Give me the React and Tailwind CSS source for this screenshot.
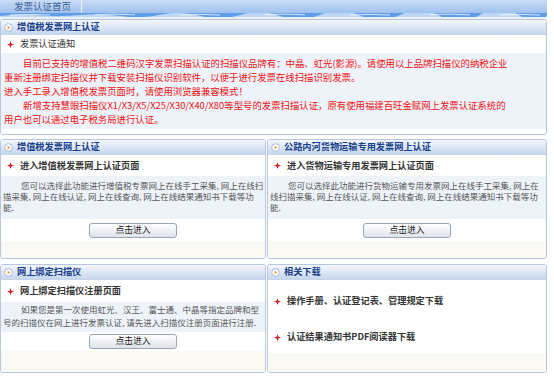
import React from "react";

const HeaderIcon = () => (
  <svg width="9" height="9" viewBox="0 0 10 10" className="shrink-0">
    <circle cx="5" cy="5" r="4.3" fill="#ffffff" stroke="#9fb5d8" strokeWidth="1" />
    <path d="M4 2.8 L7 5 L4 7.2 Z" fill="#f2a02a" />
  </svg>
);

const RedStar = () => (
  <svg width="7" height="7" viewBox="0 0 8 8" className="shrink-0">
    <path d="M4 0 L5 3 L8 4 L5 5 L4 8 L3 5 L0 4 L3 3 Z" fill="#e5141c" />
  </svg>
);

const Panel = ({ title, children, className = "" }) => (
  <div
    className={`flex flex-col overflow-hidden rounded-[3px] border border-[#b7c7df] bg-white ${className}`}
  >
    <div className="flex h-[15px] shrink-0 items-center gap-[4px] border-b border-[#c7d5ea] bg-linear-to-b from-[#f4f7fc] to-[#c8d7ee] pl-[3px]">
      <HeaderIcon />
      <span className="text-[9.2px] font-bold leading-none text-[#173f8c]">{title}</span>
    </div>
    {children}
  </div>
);

const BulletRow = ({ children, className = "", bold = true }) => (
  <div className={`flex items-center gap-[6px] pl-[6px] ${className}`}>
    <RedStar />
    <span
      className={`text-[9.2px] leading-none text-[#333333] ${bold ? "font-bold" : "font-normal"}`}
    >
      {children}
    </span>
  </div>
);

const EnterButton = () => (
  <button className="h-[15px] w-[88px] rounded-[3px] border border-[#9ba5b6] bg-linear-to-b from-white to-[#dfe3ea] text-[8.8px] leading-none text-[#222222]">
    点击进入
  </button>
);

const TopBar = () => (
  <div className="h-[19px]">
    <div className="flex h-[13px] bg-linear-to-b from-[#cadcf5] to-[#9ec1ee]">
      <div className="w-[82px] border-r border-[#edf3fc] pl-[14px] pt-[1px] text-[9.5px] leading-[10px] text-[#3d5f93]">
        发票认证首页
      </div>
    </div>
    {/* cloud strip */}
    <svg width="547" height="4" className="block">
      <rect width="547" height="4" fill="#5f9de8" />
      <path
        d="M0 3 Q20 1 40 2.5 T80 2 T120 3 T160 1.8 T200 2.8 T240 2 T280 3 T320 1.8 T360 2.6 T400 2 T440 3 T480 1.8 T520 2.8 T547 2 L547 4 L0 4 Z"
        fill="#cfe2f9"
        opacity="0.85"
      />
      <path
        d="M10 2 Q30 0.8 50 2 M95 1.6 Q115 0.6 135 1.8 M180 2 Q200 0.8 220 2 M265 1.6 Q285 0.6 305 1.8 M350 2 Q370 0.8 390 2 M430 1.6 Q450 0.6 470 1.8 M500 2 Q520 0.8 540 2"
        stroke="#ffffff"
        strokeWidth="0.8"
        fill="none"
        opacity="0.9"
      />
    </svg>
    <div className="h-[2px] bg-[#eaf1fa]" />
  </div>
);

export default function App() {
  return (
    <div className="h-[377px] w-[554px] overflow-hidden bg-white font-['Noto_Sans_CJK_SC','Noto_Sans',sans-serif]">
      <div className="w-[547px]">
        <TopBar />

        <Panel title="增值税发票网上认证" className="h-[116px]">
          <BulletRow className="h-[18px]" bold={false}>
            发票认证通知
          </BulletRow>
          <div className="h-[76px] whitespace-nowrap bg-[#eef3fa] pl-[3px] pt-[3px] text-[9.4px] leading-[14px] text-[#f01010]">
            <div className="indent-[19px]">
              目前已支持的增值税二维码汉字发票扫描认证的扫描仪品牌有：中晶、虹光(影源)。请使用以上品牌扫描仪的纳税企业
            </div>
            <div>重新注册绑定扫描仪并下载安装扫描仪识别软件，以便于进行发票在线扫描识别发票。</div>
            <div>进入手工录入增值税发票页面时，请使用浏览器兼容模式！</div>
            <div className="indent-[19px]">
              新增支持慧眼扫描仪X1/X3/X5/X25/X30/X40/X80等型号的发票扫描认证，原有使用福建百旺金赋网上发票认证系统的
            </div>
            <div>用户也可以通过电子税务局进行认证。</div>
          </div>
        </Panel>

        <div className="mt-[4px] grid grid-cols-[266px_280px] gap-x-[1px]">
          <Panel title="增值税发票网上认证" className="h-[120px]">
            <BulletRow className="h-[21px]">进入增值税发票网上认证页面</BulletRow>
            <div className="h-[43px] whitespace-nowrap bg-[#eef3fa] pl-[2px] pt-[4px] text-[8.5px] leading-[11px] text-[#555555]">
              <div className="indent-[18px]">
                您可以选择此功能进行增值税专票网上在线手工采集, 网上在线扫
              </div>
              <div>描采集, 网上在线认证, 网上在线查询, 网上在线结果通知书下载等功</div>
              <div>能.</div>
            </div>
            <div className="flex h-[22px] items-center justify-center">
              <EnterButton />
            </div>
            <div className="flex-1 bg-[#fbf9f3]" />
          </Panel>

          <Panel title="公路内河货物运输专用发票网上认证" className="h-[120px]">
            <BulletRow className="h-[21px]">进入货物运输专用发票网上认证页面</BulletRow>
            <div className="h-[43px] whitespace-nowrap bg-[#eef3fa] pl-[2px] pt-[4px] text-[8.5px] leading-[11px] text-[#555555]">
              <div className="indent-[18px]">
                您可以选择此功能进行货物运输专用发票网上在线手工采集, 网上在
              </div>
              <div>线扫描采集, 网上在线认证, 网上在线查询, 网上在线结果通知书下载等功</div>
              <div>能.</div>
            </div>
            <div className="flex h-[22px] items-center justify-center">
              <EnterButton />
            </div>
            <div className="flex-1 bg-[#fbf9f3]" />
          </Panel>
        </div>

        <div className="mt-[5px] grid grid-cols-[266px_280px] gap-x-[1px]">
          <Panel title="网上绑定扫描仪" className="h-[109px]">
            <BulletRow className="h-[22px]">网上绑定扫描仪注册页面</BulletRow>
            <div className="h-[30px] whitespace-nowrap bg-[#eef3fa] pl-[2px] pt-[1px] text-[8.5px] leading-[13px] text-[#555555]">
              <div className="indent-[18px]">
                如果您是第一次使用虹光、汉王、富士通、中晶等指定品牌和型
              </div>
              <div>号的扫描仪在网上进行发票认证, 请先进入扫描仪注册页面进行注册.</div>
            </div>
            <div className="flex h-[19px] items-center justify-center">
              <EnterButton />
            </div>
            <div className="flex-1 bg-[#fbf9f3]" />
          </Panel>

          <Panel title="相关下载" className="h-[109px]">
            <div className="flex h-[73px] flex-col pt-[16px]">
              <BulletRow className="h-[10px]">操作手册、认证登记表、管理规定下载</BulletRow>
              <BulletRow className="mt-[26px] h-[10px]">认证结果通知书PDF阅读器下载</BulletRow>
            </div>
            <div className="flex-1 bg-[#fbf9f3]" />
          </Panel>
        </div>
      </div>
    </div>
  );
}
